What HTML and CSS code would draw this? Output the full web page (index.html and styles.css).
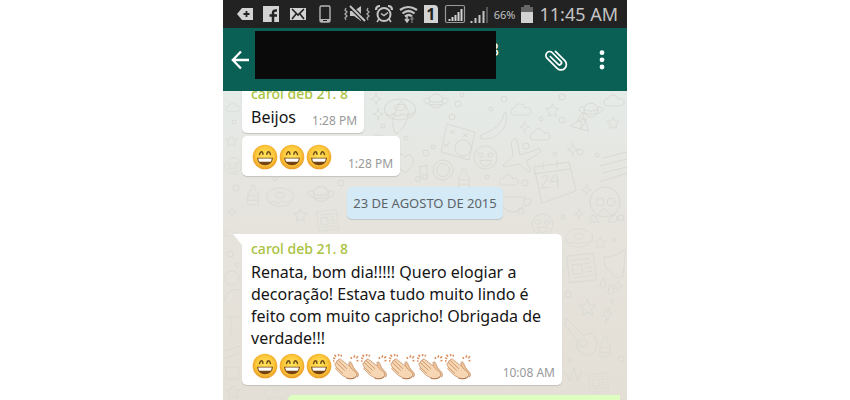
FILE: index.html
```html
<!DOCTYPE html>
<html lang="pt-BR">
<head>
  <meta charset="UTF-8">
  <meta name="viewport" content="width=device-width, initial-scale=1.0">
  <title>Chat</title>
  <link rel="stylesheet" href="styles.css">
</head>
<body>
  <!-- shared shapes -->
  <svg class="defs" aria-hidden="true">
    <defs>
      <radialGradient id="skin" cx="50%" cy="45%" r="55%">
        <stop offset="0" stop-color="#ffe45c"/>
        <stop offset=".65" stop-color="#fdc93c"/>
        <stop offset="1" stop-color="#e99a25"/>
      </radialGradient>
      <symbol id="smile" viewBox="0 0 27 27">
        <circle cx="14" cy="13" r="12.300" fill="url(#skin)"/>
        <path d="M8.500 10.500q.8-2.800 2-2.800t1.500 2.600M15.800 10.300q.5-2.600 1.700-2.600t2 2.800" fill="none" stroke="#6b4a16" stroke-width="1.400" stroke-linecap="round"/>
        <path d="M6 13.800h16q-.7 7.400-8 7.400t-8-7.400z" fill="#754313"/>
        <path d="M7.200 14.600h13.600q-.3 2.600-1.300 3.100H8.500Q7.500 17.200 7.200 14.600z" fill="#fff"/>
      </symbol>
      <symbol id="clap" viewBox="0 0 28 27">
        <path d="M17.500 14l-.6-4.500q1.200-1.800 2.500.2l2.200 5 4.300 5q1.500 2.300-.4 4.500z" fill="#edc49b" stroke="#bd8860" stroke-width=".7"/>
        <path d="M2.800 11.200q-.2-1.700 1.700-1.500-.6-2.300 1.500-2.300.3-2 2.500-1.200L17.300 13q1.500 1 2.200 2.800l4.700 3.800q1.800 2.600-.8 4.800-2.700 2.200-7.400 1l-5.500-2.900-6.300-6q-1.200-1.600.2-2.100z" fill="#f6d6b3" stroke="#c18d64" stroke-width=".7" stroke-linejoin="round"/>
        <path d="M4.500 9.700l8.300 8M6 7.400l9 8.500M4.400 14.400l6.500 6" fill="none" stroke="#c08a60" stroke-width=".8"/>
        <path d="M14.500 25.200q6 1.700 9.700-1.500" fill="none" stroke="#b27a4f"/>
        <path d="M1.200 4.600l2 1.200M2.500 1.700l1.500 2M6.500 1l.3 2.200M9.700 1.700l-.8 1.800M1 8h1.500M19.200 4l.3 2M22.700 2.300l-.7 2.300M26 3.200l-1.700 2M26.500 7.500l-2 .3" fill="none" stroke="#d98d58" stroke-width="1.500"/>
      </symbol>
      <symbol id="star" viewBox="0 0 16 16"><path d="M8 1l2 4.500 5 .5-3.700 3.400 1 5L8 12l-4.300 2.400 1-5L1 6l5-.5z"/></symbol>
      <symbol id="spark" viewBox="0 0 16 16"><path d="M8 1q0 6 6 7-6 1-6 7 0-6-6-7 6-1 6-7z"/></symbol>
      <symbol id="cloud" viewBox="0 0 24 16"><path d="M5 14q-4 0-4-4t4-4q2-5 7-4 4 1 4 4 7-1 7 4 0 4-5 4z"/></symbol>
      <symbol id="planet" viewBox="0 0 26 18"><circle cx="13" cy="9" r="7"/><path d="M6.500 6Q0 6 1 9q2 4 12 4t12-4q1-3-5.500-3M6 9q7 2.500 14 0"/></symbol>
      <symbol id="face" viewBox="0 0 26 26"><circle cx="13" cy="13" r="12"/><path d="M5 11q1-5 3-2 3-2 2 3l-3 1zM16 12q-1-5 2-3 3-3 3 2l-3 2zM7 16h12q-1 6-6 6t-6-6z"/></symbol>
      <symbol id="bottle" viewBox="0 0 16 24"><path d="M6 1h4v5q4 2 4 6v11H2V12q0-4 4-6zM2 13h12M2 18h12"/></symbol>
      <symbol id="news" viewBox="0 0 32 32"><path d="M2 5l25-3 3 25-25 3zM6 9l18-2M7 13l9-1 1 9-9 1zM19 12l6-1M20 16l6-1M20 20l6-1M9 25l18-2"/></symbol>
      <symbol id="banana" viewBox="0 0 30 30"><path d="M26 1q-1 15-24 23l-1 3q10 3 18-3 12-9 9-23z"/></symbol>
      <symbol id="donut" viewBox="0 0 32 24"><ellipse cx="16" cy="11" rx="15" ry="10"/><ellipse cx="16" cy="9" rx="5" ry="3"/><path d="M2 14q4 5 8 1 4 5 8 0 5 4 12-2"/></symbol>
    </defs>
  </svg>

  <div class="phone">
    <div class="status">
      <div class="notices">
        <svg width="16" height="20" viewBox="0 0 16 20"><path d="M5 4h11v12H5L0 10z" fill="#d3d3d3"/><path d="M9.500 7v6M6.500 10h6" stroke="#222" stroke-width="1.800"/></svg>
        <svg width="16" height="20" viewBox="0 0 16 20"><path d="M0 2h16v16H0z" fill="#d3d3d3"/><path d="M10 18V9q0-3 4-2.500M6.500 11.500H14" fill="none" stroke="#222" stroke-width="2.500"/></svg>
        <svg width="18" height="20" viewBox="0 0 18 20"><path d="M1 4h16v12H1z" fill="#d3d3d3"/><path d="M3 5l6 6 6-6M3 15l4-5M15 15l-4-5" fill="none" stroke="#222" stroke-width="1.600"/></svg>
        <svg width="16" height="20" viewBox="0 0 16 20"><rect x="3" y="2" width="10" height="16" rx="1.500" fill="none" stroke="#b5b5b5" stroke-width="1.400"/><path d="M3 15h10v3H3z" fill="#b5b5b5"/><path d="M6 16.500h4" stroke="#222"/></svg>
      </div>
      <div class="system">
        <svg width="26" height="20" viewBox="0 0 26 20"><path d="M6 7h4l7-5v15l-7-5H6z" fill="#c4c4c4"/><path d="M6 2l15 15" stroke="#222" stroke-width="4.500"/><path d="M6 2l15 15" stroke="#c4c4c4" stroke-width="2"/><path d="M2 4l-1 2 2 2-2 2 2 2-2 2 1 2M24 4l-1 2 2 2-2 2 2 2-2 2 1 2" fill="none" stroke="#aaa" stroke-width="1.300"/></svg>
        <svg width="20" height="20" viewBox="0 0 20 20"><circle cx="10" cy="10.500" r="6.500" fill="none" stroke="#c4c4c4" stroke-width="2"/><path d="M7 9.500l3 2 4-3M5 15l-2 3M15 15l2 3" fill="none" stroke="#c4c4c4" stroke-width="1.500"/><path d="M2 6q0-4 4-4M18 6q0-4-4-4" fill="none" stroke="#c4c4c4" stroke-width="2.200"/></svg>
        <svg width="20" height="20" viewBox="0 0 20 20"><path d="M2 6q8-6 17 0M4.500 9.500q6-5 12 0M7 12.500q4-3 7 0" fill="none" stroke="#c4c4c4" stroke-width="2.200"/><path d="M9 12v5M7 15l2 3 2-3" fill="none" stroke="#c4c4c4" stroke-width="1.500"/><path d="M14 19v-5M12.500 15.500L14 13l1.500 2.500" fill="none" stroke="#777" stroke-width="1.300"/></svg>
        <span class="sim">1</span>
        <svg width="22" height="20" viewBox="0 0 22 20"><rect x="1.500" y="1.500" width="19" height="17" rx="1.500" fill="none" stroke="#999" stroke-width="1.200"/><path d="M5.500 17v-2M8.500 17v-4M11.500 17v-6M14.500 17V8M17.500 17V5" stroke="#d3d3d3" stroke-width="2"/></svg>
        <svg width="20" height="20" viewBox="0 0 20 20"><path d="M1.500 19v-2M5.500 19v-5M9.500 19V11M13.500 19V7" stroke="#c4c4c4" stroke-width="2"/><path d="M17 19V3" stroke="#555" stroke-width="2"/></svg>
        <span class="percent">66%</span>
        <svg width="12" height="20" viewBox="0 0 12 20"><path d="M3 1h6v2h3v5H0V3h3z" fill="#666"/><path d="M0 8h12v11H0z" fill="#d3d3d3"/></svg>
        <span class="clock">11:45 AM</span>
      </div>
    </div>

    <header class="bar">
      <button class="icon-btn" type="button" aria-label="Voltar">
        <svg width="18" height="20" viewBox="0 0 18 20"><path d="M10 1.500L1.800 10l8.200 8.500M2 10h16" fill="none" stroke="#fff" stroke-width="2.300"/></svg>
      </button>
      <div class="contact">
        <span class="contact-name">8</span>
        <span class="cover"></span>
      </div>
      <button class="icon-btn" type="button" aria-label="Anexar">
        <svg width="26" height="24" viewBox="0 0 26 24"><g transform="translate(12.500 12) rotate(-45) scale(1.150) translate(-12.500 -12)"><path d="M17.200 6v11.500c0 2.600-2.100 4.700-4.700 4.700s-4.700-2.100-4.700-4.700V5c0-1.800 1.500-3.300 3.300-3.300s3.300 1.500 3.300 3.300v10.500c0 1-.8 1.800-1.800 1.800s-1.800-.8-1.800-1.800V6" fill="none" stroke="#fff" stroke-width="1.500" stroke-linecap="round"/></g></svg>
      </button>
      <button class="icon-btn menu" type="button" aria-label="Menu">
        <svg width="6" height="20" viewBox="0 0 6 20"><g fill="#fff"><circle cx="3" cy="2.700" r="2.400"/><circle cx="3" cy="9.800" r="2.400"/><circle cx="3" cy="17" r="2.400"/></g></svg>
      </button>
    </header>

    <main class="chat">
      <svg class="doodles" viewBox="0 0 404 309" preserveAspectRatio="xMidYMin slice" aria-hidden="true">
        <use href="#planet" x="200" y="1" width="26" height="18"/>
        <use href="#spark" x="146" y="1" width="14" height="14"/>
        <use href="#donut" x="160" y="7" width="34" height="25"/>
        <use href="#banana" x="256" y="21" width="29" height="29"/>
        <use href="#cloud" x="287" y="10" width="22" height="17"/>
        <use href="#star" x="322" y="12" width="15" height="15"/>
        <use href="#planet" x="355" y="9" width="26" height="20"/>
        <use href="#cloud" x="380" y="2" width="22" height="15"/>
        <use href="#star" x="383" y="25" width="14" height="14"/>
        <use href="#cloud" x="306" y="36" width="22" height="15"/>
        <use href="#spark" x="295" y="29" width="13" height="14"/>
        <use href="#spark" x="342" y="50" width="15" height="17"/>
        <path d="M224 33l28 8-6 28-28-8zM227 40l5 3m0-4l-5 4M240 43l5 3m0-4l-5 4M221 53l5 3m0-4l-5 4"/>
        <circle cx="240" cy="57" r="8"/>
        <use href="#face" x="250" y="54" width="25" height="25"/>
        <path d="M291 48q2-2 3 2l3 14 13-4 6-3 2 3-5 4-10 6 5 10-3 1-8-8-16 3-1-2 10-9-2-14z"/>
        <circle cx="220" cy="79" r="10"/><circle cx="220" cy="79" r="6.500"/>
        <use href="#bottle" x="234" y="76" width="14" height="24"/>
        <use href="#cloud" x="276" y="82" width="20" height="14"/>
        <path d="M311 76l35-5 7 29-34 12zM311 83l36-5M319 86q6-4 5 2l-6 9 8-1M332 83l-5 8 9-1m-2-6l1 13M320 71v7m14-9v7"/>
        <path d="M359 22l-5 8h5l-2 9 7-11h-5l3-7zM347 35l14-8 5 13zM380 67l24-6M376 75l28-7M379 82l25-6M376 91l28-9"/>
        <path d="M277 106h25q-1 15-12 15t-13-15zM302 108q8-2 5 5l-6 3"/>
        <use href="#face" x="308" y="122" width="23" height="23"/>
        <circle cx="382" cy="111" r="15"/><circle cx="377" cy="111" r="4"/><circle cx="388" cy="111" r="4"/><path d="M373 126l8-9 9 9M371 124q-5 0-3 7h8zM390 124q6 0 3 7h-8z"/>
        <use href="#spark" x="357" y="92" width="13" height="14"/>
        <use href="#spark" x="350" y="116" width="12" height="14"/>
        <use href="#donut" x="341" y="137" width="30" height="22"/>
        <use href="#star" x="371" y="145" width="13" height="14"/>
        <use href="#news" x="341" y="160" width="35" height="34"/>
        <path d="M381 166q9 1 22-8l-3 27q-8 6-12-4-7-3-7-15zM380 187q6 8 0 10t0-10zM388 193q6 8 0 10t0-10z"/>
        <use href="#star" x="355" y="207" width="19" height="19"/>
        <path d="M343 227l18 18q6-6 11 1t-1 15q-8 7-14 0t-2-11l-13-16z"/><circle cx="360" cy="252" r="4"/>
        <use href="#bottle" x="375" y="244" width="14" height="24"/>
        <use href="#spark" x="389" y="187" width="12" height="16"/>
        <use href="#news" x="363" y="280" width="25" height="23"/>
        <path d="M384 217l-5 8h5l-2 8 7-11h-5l3-5zM341 280l6 10 4-14 4 15 4-12"/>
        <use href="#cloud" x="2" y="9" width="16" height="15"/>
        <use href="#star" x="2" y="43" width="13" height="14"/>
        <use href="#face" x="1" y="66" width="18" height="18"/>
        <use href="#bottle" x="23" y="92" width="14" height="24"/>
        <use href="#donut" x="42" y="96" width="30" height="22"/>
        <use href="#planet" x="84" y="92" width="28" height="22"/>
        <use href="#star" x="70" y="117" width="15" height="15"/>
        <use href="#news" x="92" y="117" width="25" height="25"/>
        <path d="M178 10q13 9 3 25t-11-2q-1-8 8-23zM182 66q5-5 8 1t-8 15q-12-8-8-15t8-1z"/>
        <use href="#spark" x="148" y="16" width="14" height="14"/>
        <use href="#face" x="145" y="43" width="22" height="22"/>
        <path d="M197 75v13M197 76l7-2v12"/><circle cx="195" cy="88" r="2.500"/><circle cx="202" cy="86" r="2.500"/>
        <use href="#spark" x="3" y="115" width="12" height="12"/>
        <use href="#cloud" x="1" y="136" width="13" height="12"/>
        <circle cx="9" cy="187" r="7"/><path d="M1 211q3-15 16-12M2 226h15M8 226v20M2 260l15-5M2 267l15-5M3 276h13v12H3z"/>
        <use href="#star" x="2" y="293" width="16" height="16"/>
        <use href="#donut" x="40" y="294" width="26" height="18"/>
        <g>
          <circle cx="239" cy="4" r="2"/><circle cx="235" cy="13" r="3"/><circle cx="229" cy="26" r="3"/><circle cx="268" cy="18" r="2"/>
          <circle cx="281" cy="8" r="3"/><circle cx="339" cy="6" r="3"/><circle cx="339" cy="29" r="3"/><circle cx="318" cy="28" r="2"/>
          <circle cx="303" cy="55" r="3"/><circle cx="332" cy="63" r="2"/><circle cx="357" cy="61" r="3"/><circle cx="374" cy="64" r="2"/>
          <circle cx="203" cy="62" r="3"/><circle cx="210" cy="56" r="2"/><circle cx="264" cy="86" r="2"/><circle cx="302" cy="92" r="3"/>
          <circle cx="298" cy="120" r="3"/><circle cx="340" cy="126" r="2"/><circle cx="398" cy="127" r="3"/><circle cx="391" cy="149" r="2"/>
          <circle cx="345" cy="203" r="3"/><circle cx="389" cy="210" r="2"/><circle cx="347" cy="269" r="2"/><circle cx="398" cy="268" r="3"/>
          <circle cx="11" cy="31" r="2"/><circle cx="13" cy="97" r="3"/><circle cx="52" cy="88" r="2"/><circle cx="118" cy="92" r="3"/>
          <circle cx="183" cy="47" r="2"/><circle cx="160" cy="35" r="2"/><circle cx="7" cy="163" r="3"/><circle cx="14" cy="174" r="2"/>
        </g>
      </svg>

      <div class="message">
        <div class="author">carol deb 21. 8</div>
        <div class="row">
          <p class="text">Beijos</p>
          <time class="time">1:28 PM</time>
        </div>
      </div>

      <div class="message follow">
        <div class="row">
          <div class="emojis" role="img" aria-label="risos">
            <svg width="27" height="27"><use href="#smile"/></svg>
            <svg width="27" height="27"><use href="#smile"/></svg>
            <svg width="27" height="27"><use href="#smile"/></svg>
          </div>
          <time class="time">1:28 PM</time>
        </div>
      </div>

      <div class="date">23 DE AGOSTO DE 2015</div>

      <div class="message tail">
        <div class="author">carol deb 21. 8</div>
        <p class="text">Renata, bom dia!!!!! Quero elogiar a<br>decoração! Estava tudo muito lindo é<br>feito com muito capricho! Obrigada de<br>verdade!!!</p>
        <div class="row last">
          <div class="emojis" role="img" aria-label="risos e palmas">
            <svg width="27" height="27"><use href="#smile"/></svg>
            <svg width="27" height="27"><use href="#smile"/></svg>
            <svg width="27" height="27"><use href="#smile"/></svg>
            <svg width="28" height="27"><use href="#clap"/></svg>
            <svg width="28" height="27"><use href="#clap"/></svg>
            <svg width="28" height="27"><use href="#clap"/></svg>
            <svg width="28" height="27"><use href="#clap"/></svg>
            <svg width="28" height="27"><use href="#clap"/></svg>
          </div>
          <time class="time">10:08 AM</time>
        </div>
      </div>

      <div class="message mine"></div>
    </main>
  </div>
</body>
</html>
```

FILE: styles.css
```css
* {
  box-sizing: border-box;
  margin: 0;
  padding: 0;
}
body {
  background-color: #fff;
  font-family: "Noto Sans", "Open Sans", sans-serif;
}
svg {
  display: block;
  flex: none;
}
.defs {
  position: absolute;
  width: 0;
  height: 0;
}
.phone {
  display: flex;
  flex-direction: column;
  max-width: 404px;
  height: 100vh;
  margin: 0 auto;
  overflow: hidden;
}

/* status bar */
.status {
  display: flex;
  flex: none;
  justify-content: space-between;
  height: 28px;
  padding: 0 9px 0 14px;
  background-color: #222;
  color: #c4c4c4;
}
.notices,
.system {
  display: flex;
  align-items: center;
}
.notices {
  gap: 10px;
}
.system {
  gap: 4px;
}
.sim {
  width: 14px;
  margin: 0 2px;
  background-color: #d3d3d3;
  border-top-right-radius: 4px;
  color: #222;
  font-size: 16px;
  font-weight: bold;
  line-height: 18px;
  text-align: center;
}
.percent {
  margin-right: 2px;
  font-size: 11px;
}
.clock {
  margin-left: 2px;
  font-size: 18px;
}

/* header */
.bar {
  display: flex;
  flex: none;
  align-items: center;
  height: 63px;
  padding: 0 22px 0 8px;
  background-color: #0a6055;
}
.icon-btn {
  border: 0;
  background: none;
  cursor: pointer;
}
.menu {
  margin-left: 29px;
}
.contact {
  position: relative;
  flex: 1;
  height: 57px;
  margin: 0 48px 0 5px;
}
.contact-name {
  position: absolute;
  top: 6px;
  right: -3px;
  color: #fff;
  font-size: 18px;
}
.cover {
  position: absolute;
  top: 0;
  left: 1px;
  right: 0;
  height: 48px;
  background-color: #0a0a0a;
}

/* conversation */
.chat {
  position: relative;
  display: flex;
  flex: 1;
  flex-direction: column;
  align-items: flex-start;
  min-height: 0;
  padding: 0 7px 0 19px;
  background: linear-gradient(#e5ebe8, #e6e4de 35%, #e4dfd6);
  overflow: hidden;
}
.doodles {
  position: absolute;
  top: 0;
  left: 0;
  width: 100%;
  height: 100%;
  fill: none;
  stroke: #dadad4;
  stroke-width: 1;
}
.message {
  position: relative;
  flex: none;
  margin-top: -12px;
  padding: 3px 7px 5px 9px;
  background-color: #fff;
  border-radius: 5px;
  box-shadow: 0 1px 1px #c5c3bd;
}
.author {
  color: #a9c23f;
  font-size: 14px;
  font-weight: 500;
  line-height: 24px;
}
.text {
  color: #151515;
  font-size: 16px;
  line-height: 22px;
}
.row {
  display: flex;
  align-items: flex-end;
  justify-content: space-between;
  gap: 16px;
}
.time {
  color: #999;
  font-size: 12px;
  line-height: 14px;
}
.emojis {
  display: flex;
}
.follow {
  margin-top: 3px;
  padding-top: 8px;
}
.date {
  position: relative;
  flex: none;
  align-self: center;
  margin: 11px 12px 15px 0;
  padding: 0 6px;
  background-color: #d4eaf6;
  border-radius: 5px;
  box-shadow: 0 1px 1px #bcc5c9;
  color: #5d6468;
  font-size: 13px;
  line-height: 32px;
}
.tail {
  width: 320px;
  max-width: 100%;
  margin-top: 0;
  border-top-left-radius: 0;
}
.tail::before {
  content: "";
  position: absolute;
  top: 0;
  left: -9px;
  border-top: 11px solid #fff;
  border-left: 9px solid transparent;
}
.last {
  padding-top: 4px;
}
.mine {
  align-self: stretch;
  height: 40px;
  margin: 10px 0 0 46px;
  background-color: #dfffc0;
  border-top-right-radius: 0;
}
```
